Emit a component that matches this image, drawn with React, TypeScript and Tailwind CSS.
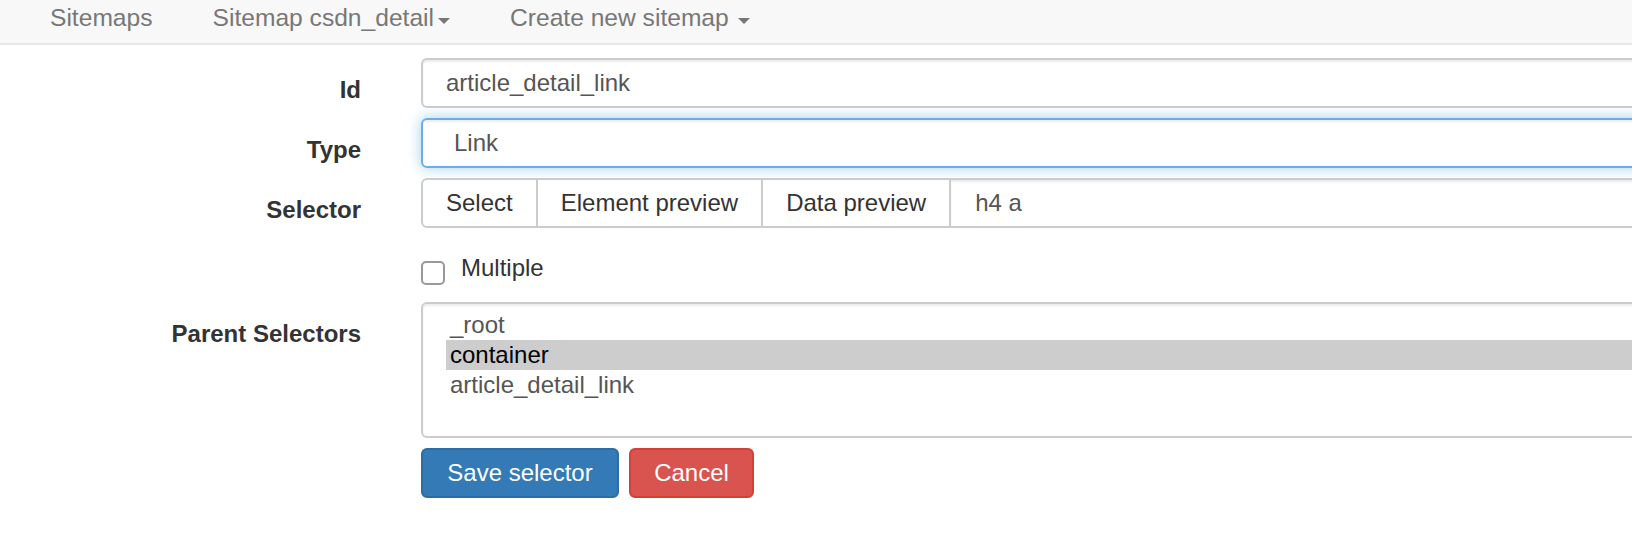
import React from "react";

const labelCls =
  "w-[361px] shrink-0 text-right font-bold text-[#333] pt-[15px] leading-[34px]";

function Caret({ className = "" }: { className?: string }) {
  return (
    <span
      className={`mt-[12px] inline-block w-0 h-0 border-t-[6px] border-t-[#777] border-x-[6px] border-x-transparent ${className}`}
    />
  );
}

function Row({ label, children, className = "" }: { label?: string; children: React.ReactNode; className?: string }) {
  return (
    <div className={`flex ${className}`}>
      <div className={labelCls}>{label}</div>
      <div className="ml-[60px] w-[1300px] shrink-0">{children}</div>
    </div>
  );
}

export default function App() {
  const parents = ["_root", "container", "article_detail_link"];

  return (
    <div className="w-[1632px] h-[556px] overflow-hidden bg-white font-['Liberation_Sans',Arial,sans-serif] text-[24px]">
      {/* Navbar */}
      <div className="h-[45px] bg-[#f8f8f8] border-b-2 border-[#e7e7e7] flex pl-[20px] text-[#777] text-[24.6px]">
        <div className="px-[30px] pt-[6px] leading-6">Sitemaps</div>
        <div className="px-[30px] pt-[6px] leading-6 flex items-start">
          <span>Sitemap csdn_detail</span>
          <Caret className="ml-[4px]" />
        </div>
        <div className="px-[30px] pt-[6px] leading-6 flex items-start">
          <span>Create new sitemap</span>
          <Caret className="ml-[9px]" />
        </div>
      </div>

      {/* Form */}
      <div className="flex flex-col">
        <Row label="Id" className="mt-[13px]">
          <div className="h-[50px] border-2 border-[#ccc] rounded-[6px] px-[23px] leading-[46px] text-[#555] shadow-[inset_0_2px_2px_rgba(0,0,0,0.075)]">
            article_detail_link
          </div>
        </Row>

        <Row label="Type" className="mt-[10px]">
          <div className="h-[50px] border-2 border-[#66afe9] rounded-[6px] pl-[31px] leading-[46px] text-[#555] shadow-[inset_0_2px_2px_rgba(0,0,0,0.075),0_0_14px_rgba(102,175,233,0.6)]">
            Link
          </div>
        </Row>

        <Row label="Selector" className="mt-[10px]">
          <div className="h-[50px] border-2 border-[#ccc] rounded-[6px] flex leading-[46px]">
            <div className="px-[23px] border-r-2 border-[#ccc] text-[#333]">Select</div>
            <div className="px-[23px] border-r-2 border-[#ccc] text-[#333]">Element preview</div>
            <div className="px-[23px] border-r-2 border-[#ccc] text-[#333]">Data preview</div>
            <div className="flex-1 px-[24px] text-[#555] shadow-[inset_0_2px_2px_rgba(0,0,0,0.075)]">h4 a</div>
          </div>
        </Row>

        <Row className="mt-[23px]">
          <div className="flex items-start">
            <span className="mt-[10px] w-6 h-6 border-2 border-[#999] rounded-[5px] bg-white" />
            <span className="ml-[16px] leading-[34px] text-[#333]">Multiple</span>
          </div>
        </Row>

        <Row label="Parent Selectors" className="mt-[17px]">
          <div className="h-[136px] border-2 border-[#ccc] rounded-[6px] pt-[6px] pl-[23px] text-[#555] shadow-[inset_0_2px_2px_rgba(0,0,0,0.075)]">
            {parents.map((p) => (
              <div
                key={p}
                className={`leading-[30px] pl-[4px] ${p === "container" ? "bg-[#cdcdcd] text-black" : ""}`}
              >
                {p}
              </div>
            ))}
          </div>
        </Row>

        <Row className="mt-[10px]">
          <div className="flex">
            <button
              type="button"
              className="w-[198px] h-[50px] border-2 border-[#2e6da4] bg-[#337ab7] text-white rounded-[6px]"
            >
              Save selector
            </button>
            <button
              type="button"
              className="ml-[10px] w-[125px] h-[50px] border-2 border-[#d43f3a] bg-[#d9534f] text-white rounded-[6px]"
            >
              Cancel
            </button>
          </div>
        </Row>
      </div>
    </div>
  );
}
